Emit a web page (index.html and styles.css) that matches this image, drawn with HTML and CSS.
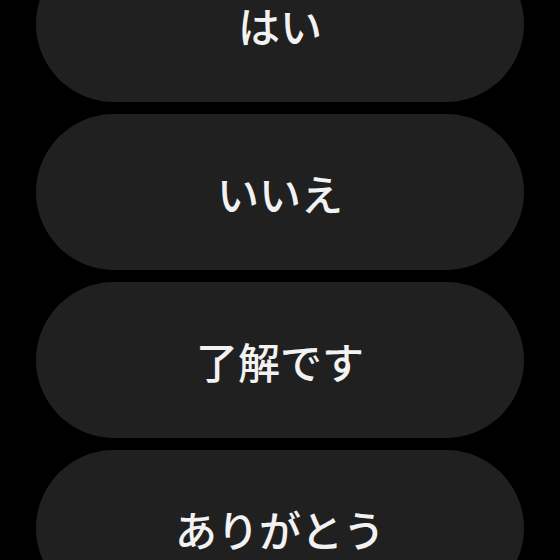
FILE: index.html
```html
<!DOCTYPE html>
<html lang="ja">

<head>
  <meta charset="UTF-8">
  <meta name="viewport" content="width=device-width, initial-scale=1.0">
  <title>Quick replies</title>
  <link rel="stylesheet" href="styles.css">
</head>

<body>
  <ul class="replies">
    <li class="reply"><a href="">はい</a></li>
    <li class="reply"><a href="">いいえ</a></li>
    <li class="reply"><a href="">了解です</a></li>
    <li class="reply"><a href="">ありがとう</a></li>
  </ul>
</body>

</html>
```

FILE: styles.css
```css
html,
body {
  margin: 0;
  height: 100%;
  background-color: #000;
  overflow: hidden;
}

a {
  text-decoration: none;
}

ul {
  padding: 0;
  margin: 0;
  list-style: none;
}

/* list is scrolled so the first reply is partly above the top */
.replies {
  display: flex;
  flex-direction: column;
  gap: 12px;
  margin-top: -54px;
  padding: 0 36px;
}

.reply a {
  display: flex;
  align-items: center;
  justify-content: center;
  height: 156px;
  border-radius: 78px;
  background-color: #202020;
  color: #f2f2f2;
  font-family: "Noto Sans CJK JP", sans-serif;
  font-size: 42px;
  font-weight: 500;
}
```
